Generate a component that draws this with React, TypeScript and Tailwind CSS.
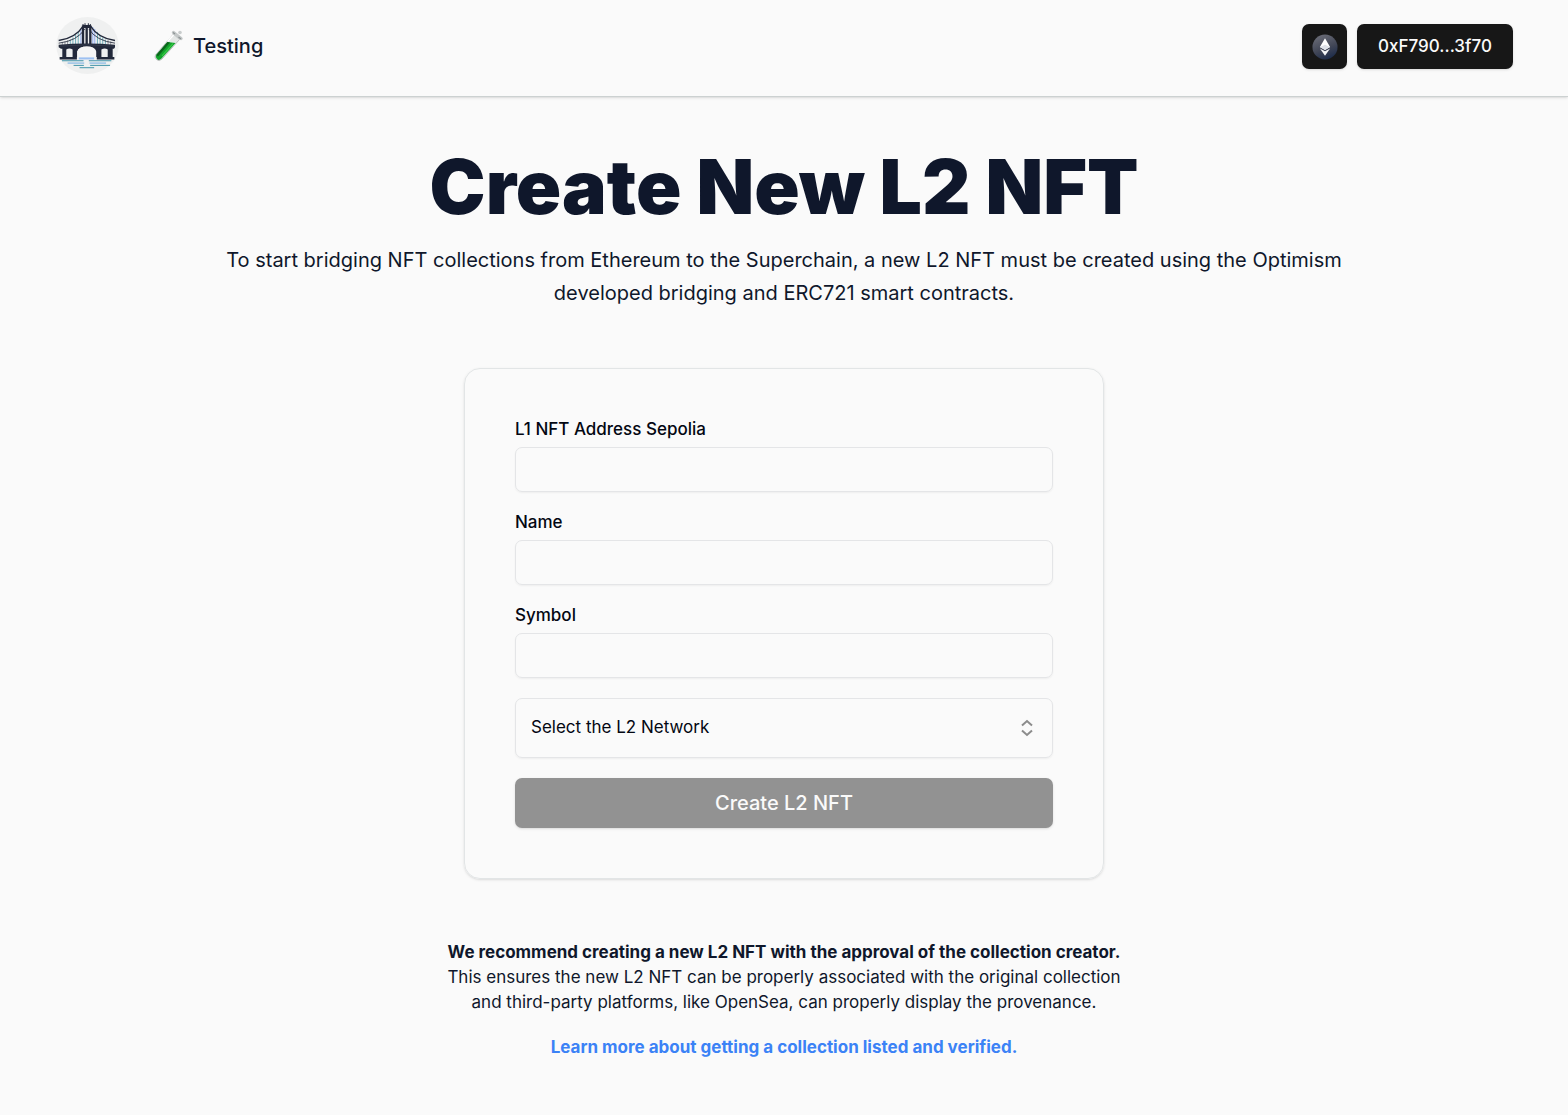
import { useId, useState } from "react";

function BridgeLogo() {
  return (
    <svg viewBox="20 22 188 172" className="h-[57px] w-[63px]" aria-hidden="true">
      <ellipse cx="114" cy="108" rx="94" ry="86" fill="#eff0f0" />
      <g stroke="#4f9fb0" strokeWidth="2.4">
        <path d="M62 90v14M70 84v20M78 76v28M86 67v38M144 67v38M152 76v28M160 84v20M168 90v14" />
        <path d="M94 58v46M130 52v52M136 58v46" stroke="#7d9cf0" />
      </g>
      <g stroke="#3d4352" strokeWidth="1.6">
        <path d="M38 98v8M46 96v10M54 92v14M176 92v14M184 96v10" />
      </g>
      <g fill="none" stroke="#22283a">
        <path d="M27 93Q78 86 102 48M197 93Q146 86 122 48" strokeWidth="4" />
        <path d="M27 101Q84 94 106 58M197 101Q140 94 118 58" strokeWidth="2.5" />
      </g>
      <path
        d="M97 48h2v-5h3v3h3v-5h3v5h7v-5h3v5h3v-3h3v5h2v56h-29z M104 55v49h4V55z M115 55v49h4V55z"
        fill="#22283a"
        fillRule="evenodd"
      />
      <path
        d="M27 106Q112 98 197 106V113L194 118H190V143H195V150H142V143H140V126Q136 111 112 111Q88 111 83 126V143H82V150H30V143H38V118H34L27 113Z M50 120V143H69V120Q60 114 50 120Z M156 120V143H175V120Q166 114 156 120Z"
        fill="#22283a"
        fillRule="evenodd"
      />
      <path d="M83 143V126Q88 111 112 111Q136 111 140 126V143Z" fill="#f5f5f5" />
      <path d="M31 110Q112 102 193 110" fill="none" stroke="#4b5162" strokeWidth="1.2" />
      <path d="M88 147H134" stroke="#9dc0f2" strokeWidth="6" />
      <g strokeWidth="3">
        <path d="M37 154H102M118 154H186M72 168H103M122 168H182" stroke="#3f93a8" />
        <path d="M54 161H104M120 161H170" stroke="#6fabe2" />
        <path d="M90 175H134" stroke="#3f93a8" />
      </g>
    </svg>
  );
}

function TestTube() {
  return (
    <svg viewBox="0 0 32 32" className="size-8" aria-hidden="true">
      <path d="M2.500 25L20.500 4L26.500 9.500L9 29Q6 32 3.500 29.500Q1 27 2.500 25Z" fill="#e4e7e6" stroke="#aeb3b2" strokeWidth="0.8" />
      <path d="M3.200 25L14.500 12L22.500 13L8.500 28.500Q6 31 4 29Q2 27 3.200 25Z" fill="#12a32b" />
      <path d="M3.200 25L14.500 12L17 12.400L5 26.500Z" fill="#0b651c" />
      <path d="M9 26L20 13.500" stroke="#35c745" strokeWidth="1.200" />
      <path d="M14.500 11.500L20.500 5" stroke="#fff" strokeWidth="1.500" />
      <path d="M20.500 2.500L28 8.500" stroke="#c4c8c8" strokeWidth="3.400" strokeLinecap="round" />
      <path d="M20 2.500L22 4M25.500 7L28 9" stroke="#8d9394" strokeWidth="1.200" />
      <circle cx="27" cy="2.500" r="1.800" fill="#c9cdcd" />
    </svg>
  );
}

function EthereumIcon() {
  return (
    <svg viewBox="0 0 28 28" className="size-[26px]" aria-hidden="true">
      <defs>
        <linearGradient id="coin" x1="0.300" y1="0" x2="0.700" y2="1">
          <stop offset="0" stopColor="#6a6c77" />
          <stop offset="0.550" stopColor="#424757" />
          <stop offset="1" stopColor="#1a2949" />
        </linearGradient>
      </defs>
      <circle cx="14" cy="14" r="13.500" fill="url(#coin)" />
      <path d="M14 4.500L8.500 14L14 17.200L19.500 14Z" fill="#fff" />
      <path d="M14 11.500L8.500 14L14 17.200L19.500 14Z" fill="#dfe2e9" />
      <path d="M8.500 15.500L14 18.700L19.500 15.500L14 23.500Z" fill="#f4f5f8" />
    </svg>
  );
}

function Field({ label }: { label: string }) {
  const id = useId();
  const [value, setValue] = useState("");
  return (
    <div className="flex flex-col gap-2">
      <label htmlFor={id} className="text-[17px] leading-5 font-medium text-gray-950">
        {label}
      </label>
      <input
        id={id}
        value={value}
        onChange={(e) => setValue(e.target.value)}
        className="h-[45px] w-full rounded-[7px] border border-[#e4e5e7] bg-transparent px-4 text-[17px] shadow-xs"
      />
    </div>
  );
}

export default function App() {
  return (
    <div className="min-h-screen bg-[#fafafa] font-['Inter',sans-serif] text-slate-900 antialiased">
      <header className="flex h-[97px] items-start justify-between border-b border-[#ccd1d1] px-[55px] shadow-sm">
        <div className="flex items-center gap-[34px] pt-[17px] pl-px">
          <a href="#home" aria-label="Home">
            <BridgeLogo />
          </a>
          <a href="#testing" className="flex items-center gap-2 text-xl font-medium">
            <TestTube />
            <span>Testing</span>
          </a>
        </div>
        <div className="flex gap-2.5 pt-6">
          <button
            aria-label="Ethereum network"
            className="flex size-[45px] items-center justify-center rounded-[7px] bg-[#171717] shadow-sm"
          >
            <EthereumIcon />
          </button>
          <button className="h-[45px] min-w-[156px] rounded-[7px] bg-[#171717] px-5 text-[17px] font-medium text-neutral-50 shadow-sm">
            0xF790...3f70
          </button>
        </div>
      </header>

      <main className="flex flex-col items-center px-10 pt-[50px] pb-12">
        <h1 className="text-center text-[75px] leading-[80px] font-black">Create New L2 NFT</h1>
        <p className="mt-[17px] max-w-[1140px] text-center text-xl leading-[33px]">
          To start bridging NFT collections from Ethereum to the Superchain, a new L2 NFT must be created using the
          Optimism developed bridging and ERC721 smart contracts.
        </p>

        <form
          onSubmit={(e) => e.preventDefault()}
          className="mt-[58px] flex w-full max-w-[640px] flex-col gap-5 rounded-2xl border border-[#e2e5e6] p-[50px] shadow-sm"
        >
          <Field label="L1 NFT Address Sepolia" />
          <Field label="Name" />
          <Field label="Symbol" />
          <div className="relative">
            <select
              aria-label="L2 network"
              className="h-[60px] w-full appearance-none rounded-[7px] border border-[#e4e5e7] bg-transparent px-[15px] text-[17px] text-gray-950 shadow-xs"
            >
              <option>Select the L2 Network</option>
            </select>
            <svg
              viewBox="0 0 20 20"
              className="pointer-events-none absolute inset-y-0 right-4 my-auto size-5"
              fill="none"
              stroke="#8c8c8c"
              strokeWidth="2"
              aria-hidden="true"
            >
              <path d="M5 7.500L10 3L15 7.500M5 12.500L10 17L15 12.500" />
            </svg>
          </div>
          <button disabled className="h-[50px] w-full rounded-[7px] bg-[#929292] text-xl font-medium text-neutral-50 shadow-sm">
            Create L2 NFT
          </button>
        </form>

        <div className="mt-[61px] max-w-[700px] text-center text-[17px] leading-[25px]">
          <p className="font-bold">We recommend creating a new L2 NFT with the approval of the collection creator.</p>
          <p>
            This ensures the new L2 NFT can be properly associated with the original collection and third-party
            platforms, like OpenSea, can properly display the provenance.
          </p>
          <a href="#learn-more" className="mt-5 inline-block font-bold text-[#3b82f6]">
            Learn more about getting a collection listed and verified.
          </a>
        </div>
      </main>
    </div>
  );
}
